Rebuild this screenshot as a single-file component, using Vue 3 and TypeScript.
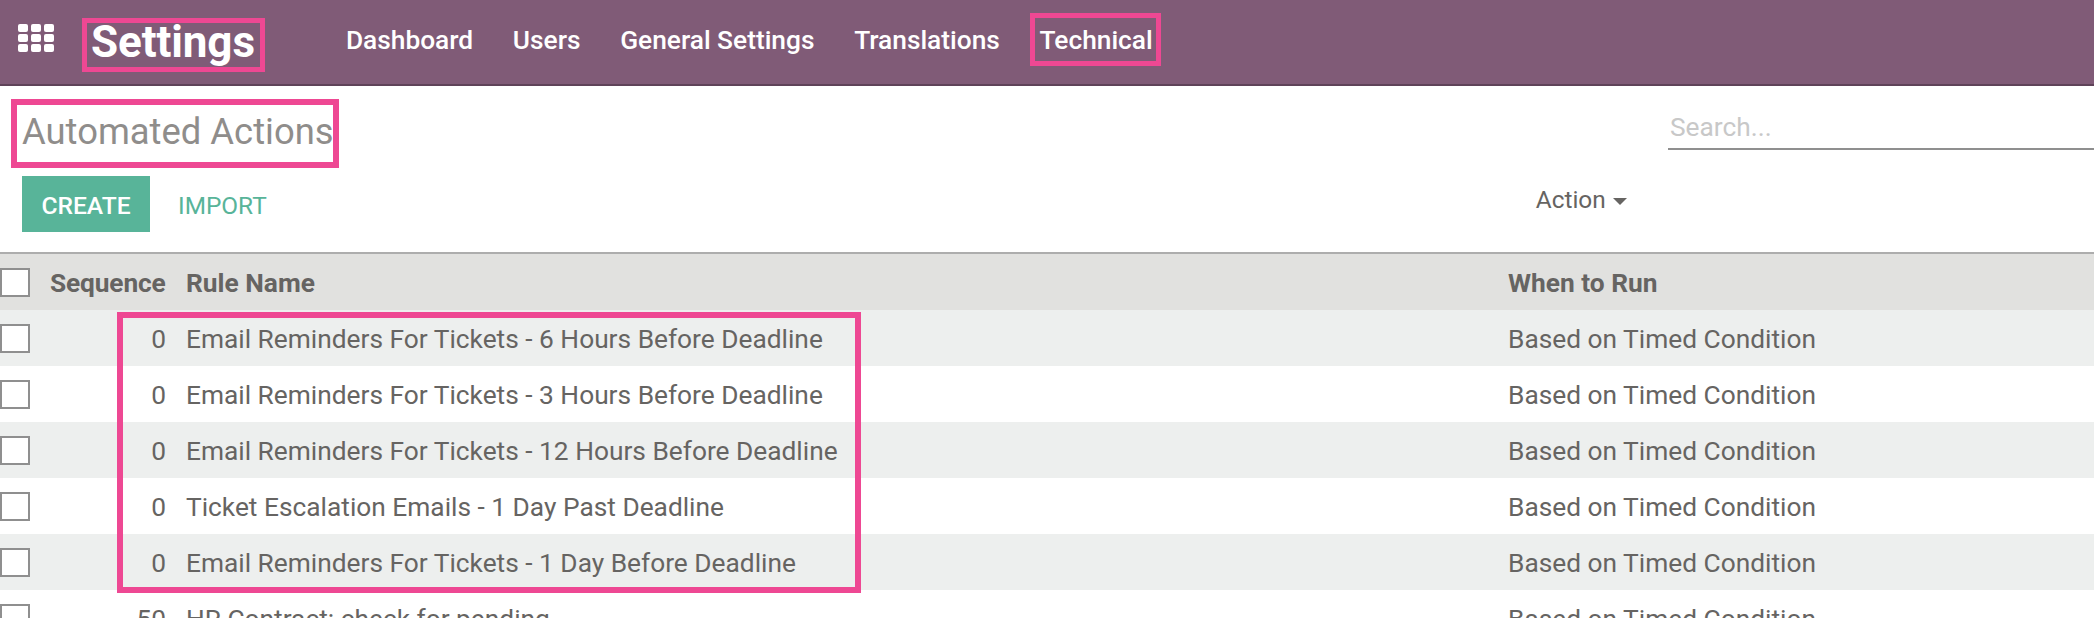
<script setup lang="ts">
const menus = ['Dashboard', 'Users', 'General Settings', 'Translations', 'Technical']

const rows = [
  { seq: 0, name: 'Email Reminders For Tickets - 6 Hours Before Deadline' },
  { seq: 0, name: 'Email Reminders For Tickets - 3 Hours Before Deadline' },
  { seq: 0, name: 'Email Reminders For Tickets - 12 Hours Before Deadline' },
  { seq: 0, name: 'Ticket Escalation Emails - 1 Day Past Deadline' },
  { seq: 0, name: 'Email Reminders For Tickets - 1 Day Before Deadline' },
  { seq: 50, name: 'HR Contract: check for pending' },
]
</script>

<template>
  <div class="page">
    <nav class="navbar">
      <svg class="apps" viewBox="0 0 36 28" fill="#fff">
        <template v-for="y in [0, 10, 20]" :key="y">
          <rect v-for="x in [0, 13, 26]" :key="x" :x="x" :y="y" width="10" height="8" rx="2" />
        </template>
      </svg>
      <span class="brand">Settings</span>
      <ul class="menu">
        <li v-for="m in menus" :key="m">{{ m }}</li>
      </ul>
    </nav>

    <section class="control">
      <div class="control-top">
        <h1 class="title">Automated Actions</h1>
        <div class="search">Search...</div>
      </div>
      <div class="control-bottom">
        <button class="btn-create">CREATE</button>
        <button class="btn-import">IMPORT</button>
        <div class="action">Action<span class="caret"></span></div>
      </div>
    </section>

    <div class="list">
      <div class="row head">
        <span class="check"></span>
        <span class="seq">Sequence</span>
        <span class="name">Rule Name</span>
        <span class="when">When to Run</span>
      </div>
      <div v-for="(r, i) in rows" :key="i" class="row">
        <span class="check"></span>
        <span class="seq">{{ r.seq }}</span>
        <span class="name">{{ r.name }}</span>
        <span class="when">Based on Timed Condition</span>
      </div>
    </div>

    <!-- pink annotations drawn on top of the screenshot -->
    <div class="mark mark-brand"></div>
    <div class="mark mark-tech"></div>
    <div class="mark mark-title"></div>
    <div class="mark mark-rows"></div>
  </div>
</template>

<style>
html,
body {
  margin: 0;
  background: #fff;
}
</style>

<style scoped>
.page {
  position: relative;
  height: 618px;
  overflow: hidden;
  font-family: Roboto, "Liberation Sans", sans-serif;
  color: #666462;
  background: #fff;
}

.navbar {
  display: flex;
  align-items: center;
  height: 84px;
  background: #805b77;
  border-bottom: 2px solid #5f4359;
  color: #fff;
  box-sizing: content-box;
}

.apps {
  width: 36px;
  height: 28px;
  margin: -8px 37px 0 18px;
}

.brand {
  font-size: 44px;
  font-weight: 700;
  letter-spacing: -0.1px;
}

.menu {
  display: flex;
  gap: 39.7px;
  list-style: none;
  margin: -4px 0 0 91px;
  padding: 0;
  font-size: 26.3px;
  font-weight: 500;
}

.control {
  height: 166px;
  padding: 0 0 0 22px;
}

.control-top {
  display: flex;
  justify-content: space-between;
  height: 90px;
}

.title {
  margin: 21px 0 0;
  font-size: 36.4px;
  font-weight: 400;
  line-height: 50px;
  color: #8f8d8b;
}

.search {
  width: 426px;
  height: 64px;
  box-sizing: border-box;
  border-bottom: 2px solid #8f8f8f;
  padding: 26px 0 0 2px;
  font-size: 26.3px;
  line-height: 30px;
  color: #c8c8c8;
}

.control-bottom {
  display: flex;
  align-items: flex-start;
}

.btn-create {
  width: 128px;
  height: 56px;
  border: none;
  padding: 2px 0 0;
  background: #58b499;
  color: #fff;
  font: 500 24.6px Roboto, sans-serif;
}

.btn-import {
  margin-left: 28px;
  height: 56px;
  border: none;
  padding: 2px 0 0;
  background: none;
  color: #58b499;
  font: 400 24.4px Roboto, sans-serif;
}

.action {
  display: flex;
  align-items: center;
  margin-left: 1269px;
  height: 47px;
  font-size: 24.4px;
}

.caret {
  margin: 3px 0 0 7px;
  border-top: 7px solid #666462;
  border-left: 7px solid transparent;
  border-right: 7px solid transparent;
}

.list {
  border-top: 2px solid #adadad;
}

.row {
  display: grid;
  grid-template-columns: 50px 116px 1342px 1fr;
  align-items: center;
  height: 56px;
  font-size: 26.3px;
}

.row:nth-child(even) {
  background: #edefee;
}

.row.head {
  background: #e1e1df;
  font-weight: 700;
}

.head .seq {
  letter-spacing: -0.15px;
  padding-right: 1px;
}

.seq,
.name,
.when {
  padding-top: 2px;
  white-space: nowrap;
}

.check {
  width: 30px;
  height: 29px;
  box-sizing: border-box;
  border: 2px solid #8f8f8f;
  background: #fff;
}

.seq {
  text-align: right;
}

.name {
  padding-left: 20px;
}

.mark {
  position: absolute;
  box-sizing: border-box;
  border: 5px solid #ee4893;
  pointer-events: none;
}

.mark-brand {
  left: 82px;
  top: 18px;
  width: 183px;
  height: 54px;
}

.mark-tech {
  left: 1030px;
  top: 13px;
  width: 131px;
  height: 53px;
}

.mark-title {
  left: 11px;
  top: 99px;
  width: 328px;
  height: 69px;
  border-width: 6px;
}

.mark-rows {
  left: 117px;
  top: 312px;
  width: 744px;
  height: 281px;
  border-width: 6px;
}
</style>
